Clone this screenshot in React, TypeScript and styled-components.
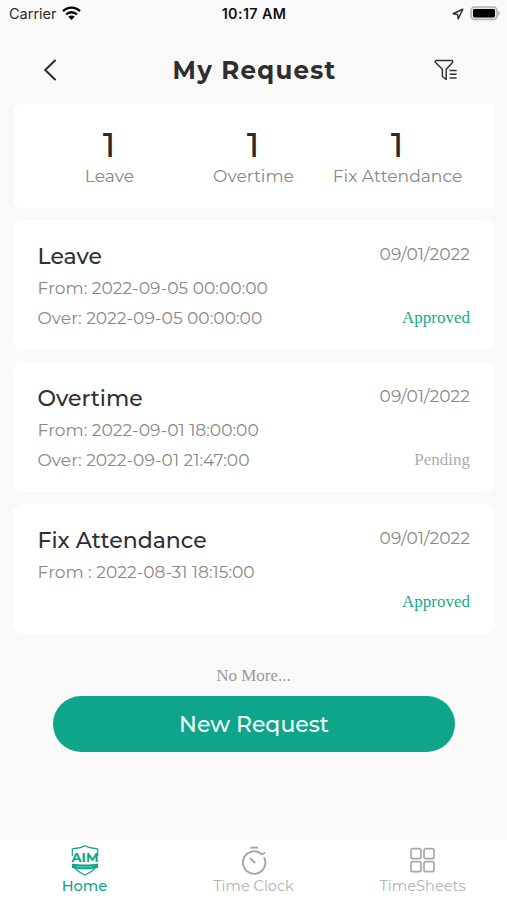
import React from 'react';
import styled, { createGlobalStyle } from 'styled-components';

const GREEN = '#0fa58b';

const GlobalStyle = createGlobalStyle`
  * { box-sizing: border-box; }
  body { margin: 0; background: #f9f9f9; font-family: Montserrat, Inter, sans-serif; }
`;

const Screen = styled.div`
  display: flex;
  flex-direction: column;
  width: 507px;
  height: 900px;
  overflow: hidden;
  background: #f9f9f9;
`;

const StatusBar = styled.header`
  display: grid;
  grid-template-columns: 1fr auto 1fr;
  align-items: center;
  height: 28px;
  padding: 0 6px 0 9px;
  font-family: Inter, sans-serif;
`;

const Carrier = styled.div`
  display: flex;
  align-items: center;
  gap: 5px;
  font-size: 14.5px;
  line-height: 28px;
  color: #2b2b2b;

  svg { margin-bottom: 2px; }
`;

const Clock = styled.time`
  margin-right: 2px;
  font-size: 14.3px;
  font-weight: 600;
  line-height: 28px;
  letter-spacing: 0.4px;
  color: #111;
`;

const Indicators = styled.div`
  display: flex;
  justify-content: flex-end;
  align-items: center;
  gap: 6px;
  padding-bottom: 1px;
`;

const TitleBar = styled.div`
  display: grid;
  grid-template-columns: 60px 1fr 60px;
  align-items: center;
  height: 76px;
  padding: 0 31px 0 32px;
`;

const IconButton = styled.button<{ $end?: boolean }>`
  display: flex;
  justify-content: ${({ $end }) => ($end ? 'flex-end' : 'flex-start')};
  padding: ${({ $end }) => ($end ? '8px 18px 0 0' : '7px 0 0 11px')};
  border: 0;
  background: none;
`;

const Title = styled.h1`
  justify-self: center;
  margin: 8px -1px 0 0;
  font-size: 24.5px;
  line-height: 32px;
  font-weight: 700;
  letter-spacing: 1.25px;
  color: #2e2e2e;
`;

const Content = styled.main`
  display: flex;
  flex-direction: column;
  flex: 1;
  gap: 12px;
  padding: 0 12px 0 13px;
`;

const Summary = styled.section`
  display: grid;
  grid-template-columns: repeat(3, 144px);
  height: 104px;
  margin-left: 1px;
  padding: 21px 0 0 23px;
  border-radius: 8px;
  background: #fff;
`;

const Stat = styled.div`
  display: flex;
  flex-direction: column;
  align-items: center;
  white-space: nowrap;
`;

const StatValue = styled.strong`
  font-size: 34px;
  font-weight: 500;
  line-height: 40px;
  color: #2a2a2a;
`;

const StatLabel = styled.span`
  padding-left: 1px;
  font-size: 17.1px;
  line-height: 22px;
  color: #888;
`;

const Card = styled.article`
  display: flex;
  justify-content: space-between;
  height: 130px;
  padding: 20px 25px 18px 24.5px;
  border-radius: 10px;
  background: #fff;
`;

const Details = styled.div`
  display: flex;
  flex-direction: column;
  align-items: flex-start;
`;

const CardTitle = styled.h2`
  margin: 0;
  font-size: 22px;
  font-weight: 500;
  line-height: 33px;
  color: #303030;
`;

const Line = styled.span`
  font-size: 17.1px;
  line-height: 29.5px;
  color: #888;
`;

const Meta = styled.div`
  display: flex;
  flex-direction: column;
  justify-content: space-between;
  align-items: flex-end;
`;

const DateText = styled.span`
  font-size: 17.1px;
  line-height: 28px;
  color: #888;
`;

const Status = styled.span<{ $approved: boolean }>`
  font-family: 'Liberation Serif', serif;
  font-size: 17px;
  line-height: 29px;
  color: ${({ $approved }) => ($approved ? '#18aa88' : '#adadad')};
`;

const Footer = styled.div`
  display: flex;
  flex-direction: column;
  align-items: center;
  padding-top: 6px;
`;

const EndNote = styled.p`
  margin: 0 1px 0 0;
  font-family: 'Liberation Serif', serif;
  font-size: 17px;
  line-height: 48px;
  height: 44px;
  color: #999;
`;

const PrimaryButton = styled.button`
  width: 402px;
  height: 56px;
  padding: 0;
  border: 0;
  border-radius: 28px;
  background: ${GREEN};
  color: #f4fffd;
  font-family: inherit;
  font-size: 22px;
  font-weight: 500;
  line-height: 55px;
`;

const TabBar = styled.nav`
  display: grid;
  grid-template-columns: repeat(3, 1fr);
  height: 60px;
  background: #fff;
`;

const Tab = styled.a<{ $active?: boolean }>`
  display: flex;
  flex-direction: column;
  align-items: center;
  padding-top: 5px;
  color: ${({ $active }) => ($active ? GREEN : '#a9a9a9')};
`;

const TabLabel = styled.span<{ $active?: boolean }>`
  font-size: 14.6px;
  font-weight: ${({ $active }) => ($active ? 500 : 400)};
  line-height: 21px;
  color: ${({ $active }) => ($active ? GREEN : '#b2b2b2')};
`;

const WifiIcon = () => (
  <svg width="19" height="15" viewBox="0 0 19 15">
    <g fill="none" stroke="#000" strokeWidth="2.4">
      <path d="M1 5.2C5.8.4 13.2.4 18 5.2" />
      <path d="M4.1 8.5c3.1-3.1 7.7-3.1 10.8 0" />
    </g>
    <path d="M9.5 14 6.3 10.7c1.8-1.7 4.6-1.7 6.4 0z" />
  </svg>
);

const LocationIcon = () => (
  <svg width="12" height="12" viewBox="0 0 12 12">
    <path d="M10.8 1.2 1 5.7l4.6.7.6 4.6z" fill="none" stroke="#333" strokeWidth="1.5" strokeLinejoin="round" />
  </svg>
);

const BatteryIcon = () => (
  <svg width="31" height="15" viewBox="0 0 31 15">
    <rect x="1" y="1" width="26" height="12.5" rx="3.6" fill="#e4e4e4" stroke="#b4b4b4" strokeWidth="1.6" />
    <rect x="3" y="3" width="22" height="8.5" rx="1.4" />
    <path d="M28.3 5v4.6c2.3-.7 2.3-3.9 0-4.6z" fill="#b4b4b4" />
  </svg>
);

const BackIcon = () => (
  <svg width="14" height="22" viewBox="0 0 14 22">
    <path d="M12 1.5 2.2 11 12 20.5" fill="none" stroke="#2d2d2d" strokeWidth="2" strokeLinecap="round" />
  </svg>
);

const FilterIcon = () => (
  <svg width="24" height="22" viewBox="0 0 24 22" fill="none" stroke="#333" strokeWidth="1.5">
    <path d="M2.3 1.5h15.4c1 0 1.4 1.2.8 2l-6.3 6.8v10.2l-3.8-3v-7.2L1.5 3.5c-.6-.8-.2-2 .8-2z" strokeLinejoin="round" />
    <path d="M15.6 11.5h7M15.6 15.3h7M15.6 19h7" />
  </svg>
);

const ShieldLogo = () => (
  <svg width="30" height="31" viewBox="0 0 30 31">
    <g fill="none" stroke={GREEN} strokeWidth="1.2" strokeLinejoin="round">
      <path d="M2.3 11V3.8C8 3.6 12 2.4 15 .8c3 1.6 7 2.8 12.7 3V11" />
      <path d="M4 21c1.5 4.5 6 6.8 11 9 5-2.2 9.5-4.5 11-9" />
    </g>
    <text x="1.5" y="17.2" textLength="27" lengthAdjust="spacingAndGlyphs" fontFamily="Montserrat, sans-serif" fontWeight="700" fontSize="13" fill={GREEN}>AIM</text>
    <path d="M2 18.5c8 1.3 18 1.3 26 0V23c-8 1.7-18 1.7-26 0z" fill={GREEN} />
    <path d="M7 21.5c5 .6 11 .6 16 0" fill="none" stroke="#9fdccf" strokeWidth="1" strokeDasharray="1.5 .8" />
  </svg>
);

const StopwatchIcon = () => (
  <svg width="28" height="31" viewBox="0 0 28 31" fill="none" stroke="currentColor" strokeWidth="2">
    <path d="M10.5 2.6H18" />
    <path d="M18.2 7.1A11.2 11.2 0 1 0 24 12.2" />
    <path d="M16.5 6.4c1.9.3 3.6 1.3 5 2.8 1.5.1 2.7-.6 3.6-1.9" />
    <path d="m10 13 5 5" strokeWidth="2.2" />
  </svg>
);

const TilesIcon = () => (
  <svg width="26" height="31" viewBox="0 0 26 31" fill="none" stroke="currentColor" strokeWidth="1.7">
    <rect x="1" y="3.7" width="10" height="10" rx="2" />
    <rect x="14" y="3.7" width="10" height="10" rx="2" />
    <rect x="1" y="16.7" width="10" height="10" rx="2" />
    <rect x="14" y="16.7" width="10" height="10" rx="2" />
  </svg>
);

const stats = [
  { label: 'Leave', value: 1 },
  { label: 'Overtime', value: 1 },
  { label: 'Fix Attendance', value: 1 },
];

const requests = [
  {
    title: 'Leave',
    date: '09/01/2022',
    status: 'Approved',
    lines: ['From: 2022-09-05 00:00:00', 'Over: 2022-09-05 00:00:00'],
  },
  {
    title: 'Overtime',
    date: '09/01/2022',
    status: 'Pending',
    lines: ['From: 2022-09-01 18:00:00', 'Over: 2022-09-01 21:47:00'],
  },
  {
    title: 'Fix Attendance',
    date: '09/01/2022',
    status: 'Approved',
    lines: ['From : 2022-08-31 18:15:00'],
  },
];

export default function App() {
  return (
    <Screen>
      <GlobalStyle />
      <StatusBar>
        <Carrier>
          Carrier
          <WifiIcon />
        </Carrier>
        <Clock>10:17 AM</Clock>
        <Indicators>
          <LocationIcon />
          <BatteryIcon />
        </Indicators>
      </StatusBar>
      <TitleBar>
        <IconButton aria-label="Back">
          <BackIcon />
        </IconButton>
        <Title>My Request</Title>
        <IconButton $end aria-label="Filter">
          <FilterIcon />
        </IconButton>
      </TitleBar>
      <Content>
        <Summary>
          {stats.map((s) => (
            <Stat key={s.label}>
              <StatValue>{s.value}</StatValue>
              <StatLabel>{s.label}</StatLabel>
            </Stat>
          ))}
        </Summary>
        {requests.map((r) => (
          <Card key={r.title}>
            <Details>
              <CardTitle>{r.title}</CardTitle>
              {r.lines.map((line) => (
                <Line key={line}>{line}</Line>
              ))}
            </Details>
            <Meta>
              <DateText>{r.date}</DateText>
              <Status $approved={r.status === 'Approved'}>{r.status}</Status>
            </Meta>
          </Card>
        ))}
        <Footer>
          <EndNote>No More...</EndNote>
          <PrimaryButton>New Request</PrimaryButton>
        </Footer>
      </Content>
      <TabBar>
        <Tab $active>
          <ShieldLogo />
          <TabLabel $active>Home</TabLabel>
        </Tab>
        <Tab>
          <StopwatchIcon />
          <TabLabel>Time Clock</TabLabel>
        </Tab>
        <Tab>
          <TilesIcon />
          <TabLabel>TimeSheets</TabLabel>
        </Tab>
      </TabBar>
    </Screen>
  );
}
